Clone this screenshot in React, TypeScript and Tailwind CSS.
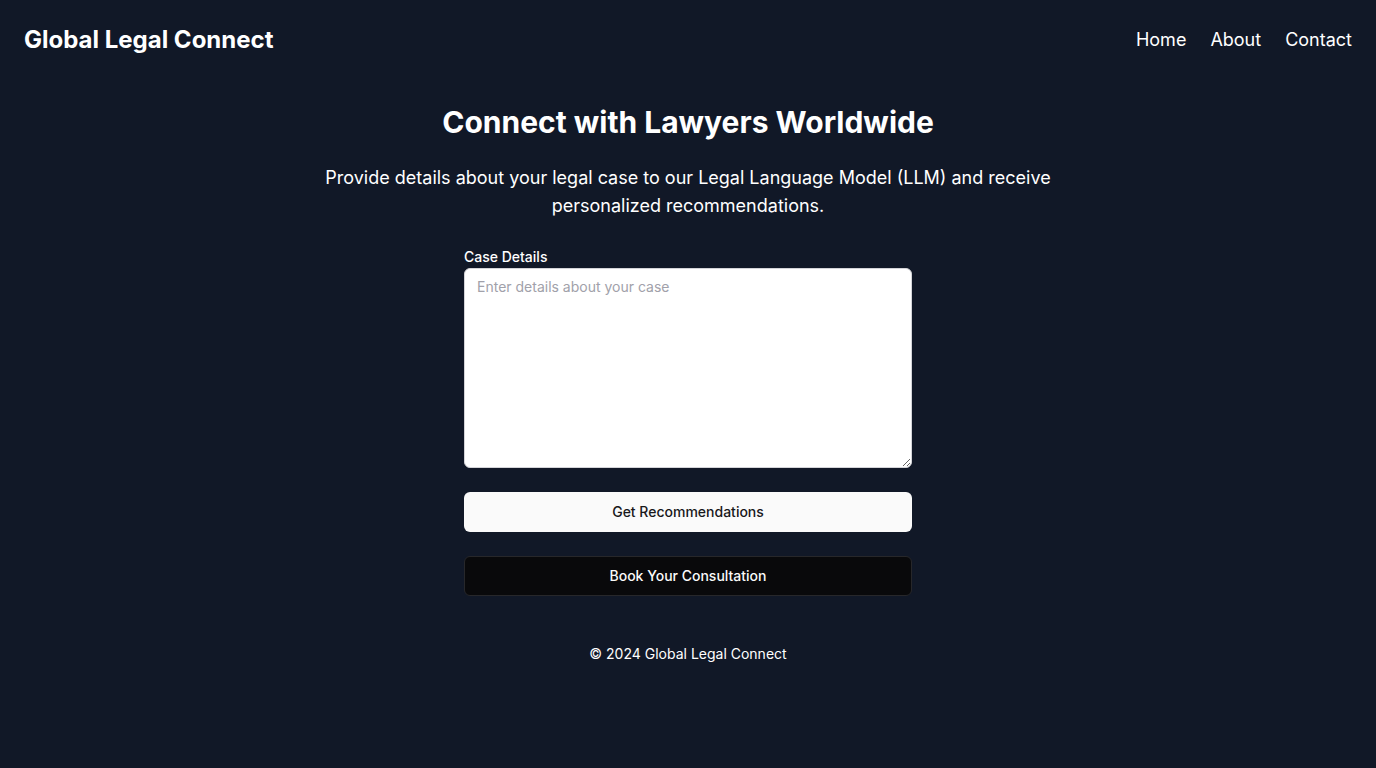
import React from "react";

export default function App() {
  return (
    <div className="min-h-[768px] bg-[#111827] text-white" style={{ fontFamily: "Inter, 'Noto Sans', sans-serif" }}>
      <header className="flex items-center justify-between px-6 py-6">
        <h1 className="text-2xl font-bold leading-8">Global Legal Connect</h1>
        <nav className="flex items-center gap-6 text-lg leading-7">
          <a href="#">Home</a>
          <a href="#">About</a>
          <a href="#">Contact</a>
        </nav>
      </header>
      <main className="flex flex-col items-center px-6 pt-6">
        <h2 className="text-3xl font-bold leading-9">Connect with Lawyers Worldwide</h2>
        <p className="mt-6 max-w-3xl text-center text-lg leading-7">
          Provide details about your legal case to our Legal Language Model (LLM) and receive personalized recommendations.
        </p>
        <form className="mt-[27px] flex w-full max-w-md flex-col" onSubmit={(e) => e.preventDefault()}>
          <label htmlFor="case" className="text-sm font-medium leading-5">Case Details</label>
          <textarea
            id="case"
            placeholder="Enter details about your case"
            className="mt-[1px] h-[200px] w-full rounded-md border border-[#d4d4d8] bg-white px-3 py-2 text-sm text-[#09090b] placeholder:text-[#a1a1aa] outline-none"
          />
          <button type="submit" className="mt-6 h-10 w-full rounded-md bg-[#fafafa] text-sm font-medium text-[#18181b]">
            Get Recommendations
          </button>
          <button type="button" className="mt-6 h-10 w-full rounded-md border border-[#27272a] bg-[#09090b] text-sm font-medium text-[#fafafa]">
            Book Your Consultation
          </button>
        </form>
      </main>
      <footer className="mt-[48px] text-center text-sm leading-5">© 2024 Global Legal Connect</footer>
    </div>
  );
}
